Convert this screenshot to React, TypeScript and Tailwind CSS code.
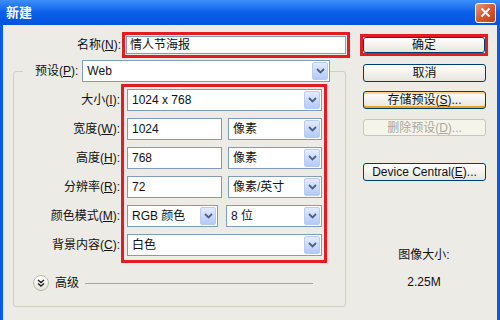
import React from "react";

const Chevron: React.FC = () => (
  <svg width="9" height="6" viewBox="0 0 9 6">
    <path d="M1 1l3.5 3.5L8 1" stroke="#4d6185" strokeWidth="1.8" fill="none" />
  </svg>
);

const Select: React.FC<{ value: string; className?: string }> = ({ value, className = "" }) => (
  <div className={`flex h-[22px] items-center border border-[#7f9db9] bg-white pl-[4px] pr-[1px] ${className}`}>
    <span className="flex-1 truncate">{value}</span>
    <div className="flex h-[18px] w-[16px] items-center justify-center rounded-[2px] border border-[#b9cbf3] bg-gradient-to-b from-[#e3ecfe] to-[#b4c9f7]">
      <Chevron />
    </div>
  </div>
);

const Input: React.FC<{ value: string; className?: string }> = ({ value, className = "" }) => (
  <div className={`flex h-[22px] items-center border border-[#7f9db9] bg-white pl-[4px] ${className}`}>
    {value}
  </div>
);

const Button: React.FC<{ children: React.ReactNode; className?: string }> = ({ children, className = "" }) => (
  <div
    className={`flex items-center justify-center rounded-[3px] border border-[#003c74] bg-gradient-to-b from-white to-[#e6e5dd] ${className}`}
  >
    {children}
  </div>
);

const labels = [
  <>大小(<u>I</u>):</>,
  <>宽度(<u>W</u>):</>,
  <>高度(<u>H</u>):</>,
  <>分辨率(<u>R</u>):</>,
  <>颜色模式(<u>M</u>):</>,
  <>背景内容(<u>C</u>):</>,
];

export default function App() {
  return (
    <div className="flex h-[320px] w-[500px] flex-col overflow-hidden bg-[#0a5ae5] text-[12px] text-[#111] [font-family:'Liberation_Sans','Noto_Sans_CJK_SC',sans-serif]">
      {/* title bar */}
      <div className="flex h-[25px] items-center justify-between bg-gradient-to-b from-[#3c8ffb] via-[#0a5fe8] to-[#0553de] pl-[6px] pr-[4px]">
        <span className="text-[13px] font-bold text-white">新建</span>
        <div className="flex h-[20px] w-[21px] items-center justify-center rounded-[3px] border border-white bg-gradient-to-br from-[#eb9473] via-[#d8592f] to-[#c03a16]">
          <svg width="11" height="11" viewBox="0 0 11 11">
            <path d="M1.5 1.5l8 8M9.5 1.5l-8 8" stroke="white" strokeWidth="2" />
          </svg>
        </div>
      </div>

      {/* body */}
      <div className="mx-[3px] flex flex-1 bg-[#ecebe6]">
        {/* left */}
        <div className="flex w-[347px] flex-col">
          <div className="mt-[7px] flex items-center">
            <div className="w-[118px] text-right">
              名称(<u>N</u>):
            </div>
            <div className="ml-[1px] flex h-[26px] w-[228px] border-[3px] border-[#e31b23] p-px">
              <div className="flex flex-1 items-center border border-[#7f9db9] bg-white pl-[3px]">情人节海报</div>
            </div>
          </div>

          <fieldset className="ml-[10px] mt-[3px] w-[333px] rounded-[3px] border border-[#d0d0bf]">
            <legend className="ml-[9px] pl-[12px]">
              <div className="flex h-[20px] items-center">
                <span>
                  预设(<u>P</u>):
                </span>
                <Select value="Web" className="ml-[4px] h-[20px] w-[248px]" />
              </div>
            </legend>

            <div className="mt-[3px] flex">
              <div className="flex w-[106px] flex-col gap-[7px] pt-[5px]">
                {labels.map((l, i) => (
                  <div key={i} className="flex h-[22px] items-center justify-end">
                    {l}
                  </div>
                ))}
              </div>
              <div className="ml-px flex w-[206px] flex-col gap-[7px] border-[3px] border-[#e31b23] pb-[4px] pl-[3px] pr-[2px] pt-[2px]">
                <Select value="1024 x 768" />
                <div className="flex gap-[6px]">
                  <Input value="1024" className="w-[95px]" />
                  <Select value="像素" className="flex-1" />
                </div>
                <div className="flex gap-[6px]">
                  <Input value="768" className="w-[95px]" />
                  <Select value="像素" className="flex-1" />
                </div>
                <div className="flex gap-[6px]">
                  <Input value="72" className="w-[95px]" />
                  <Select value="像素/英寸" className="flex-1" />
                </div>
                <div className="flex gap-[8px]">
                  <Select value="RGB 颜色" className="w-[91px]" />
                  <Select value="8 位" className="flex-1" />
                </div>
                <Select value="白色" />
              </div>
            </div>

            <div className="mb-[15px] ml-[19px] mt-[12px] flex h-[16px] items-center">
              <div className="flex h-[16px] w-[16px] items-center justify-center rounded-full border border-[#b8b8a8] bg-gradient-to-b from-white to-[#e4e3dc]">
                <svg width="8" height="8" viewBox="0 0 8 8">
                  <path d="M1 1l3 2.5L7 1M1 4.5l3 2.5 3-2.5" stroke="#222" strokeWidth="1.4" fill="none" />
                </svg>
              </div>
              <span className="ml-[6px]">高级</span>
              <div className="ml-[6px] h-px w-[228px] bg-[#a8a8a0]" />
            </div>
          </fieldset>
        </div>

        {/* right */}
        <div className="ml-[10px] flex w-[128px] flex-col">
          <div className="mt-[9px] flex h-[22px] border-[3px] border-[#e31b23]">
            <Button className="flex-1">确定</Button>
          </div>
          <Button className="ml-[3px] mt-[8px] h-[18px] w-[123px]">取消</Button>
          <Button className="ml-[3px] mt-[9px] h-[18px] w-[123px] shadow-[inset_0_2px_0_#ffd58c,inset_0_-2px_0_#e8a320]">
            存储预设(<u>S</u>)...
          </Button>
          <div className="ml-[3px] mt-[10px] flex h-[17px] w-[123px] items-center justify-center rounded-[3px] border border-[#c9c7ba] bg-[#f5f4ea] text-[#aca899]">
            删除预设(<u>D</u>)...
          </div>
          <Button className="ml-[3px] mt-[27px] h-[18px] w-[123px]">
            Device Central(<u>E</u>)...
          </Button>
          <div className="mt-[65px] text-center">图像大小:</div>
          <div className="mt-[9px] text-center">2.25M</div>
        </div>
      </div>
    </div>
  );
}
